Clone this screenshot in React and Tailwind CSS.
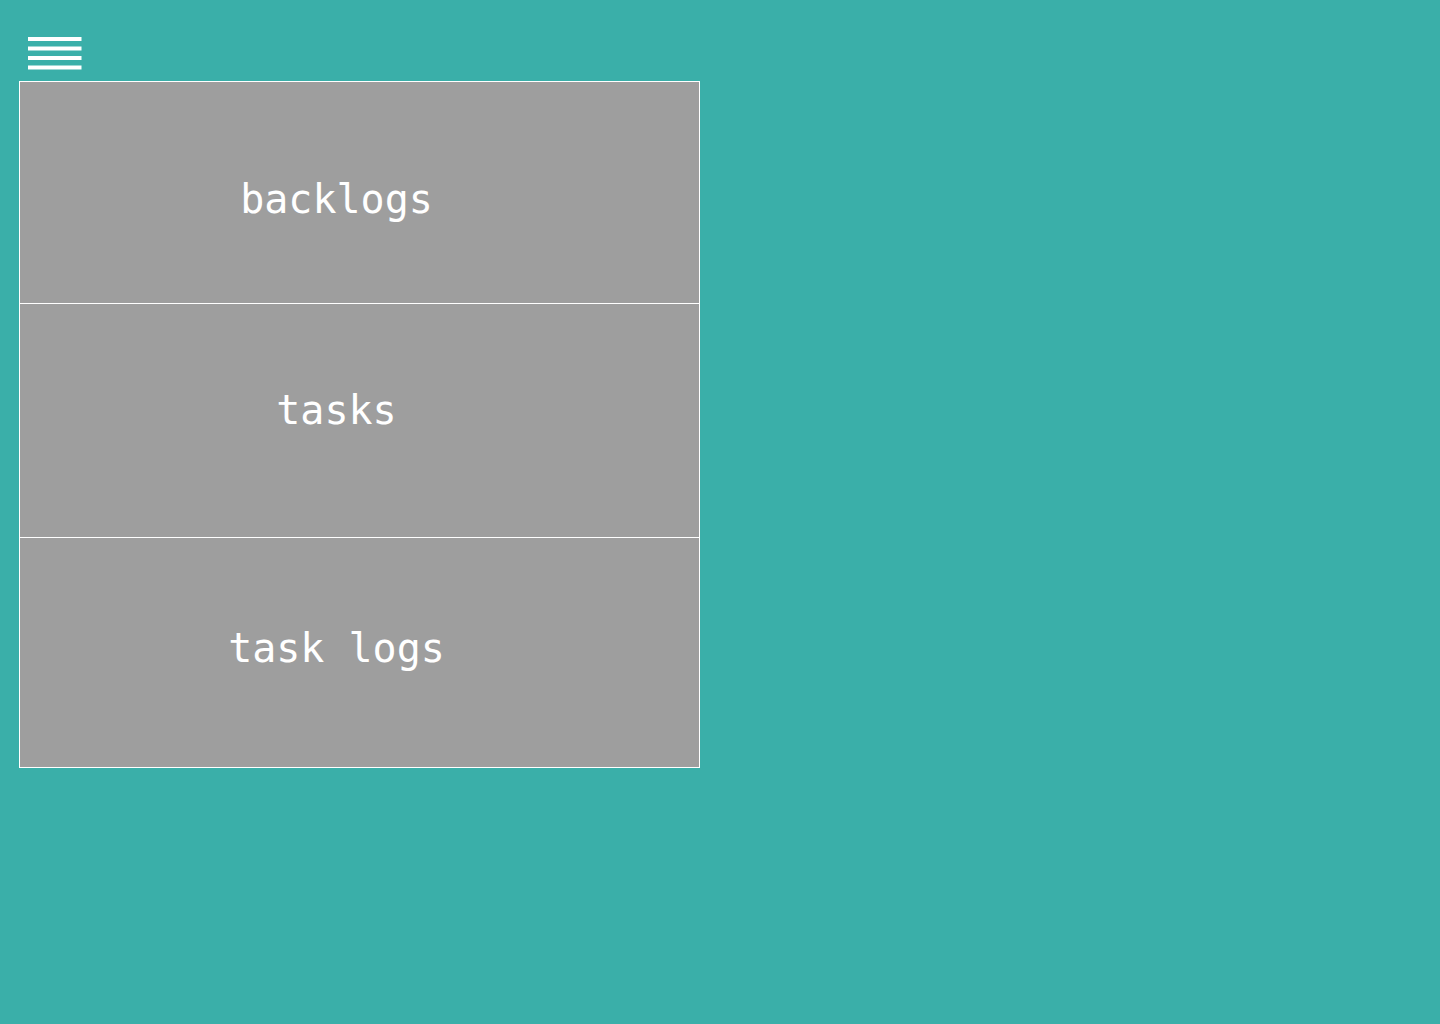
export default function App() {
  const mono = { fontFamily: '"DejaVu Sans Mono", monospace' };
  return (
    <div className="min-h-[1024px] w-full bg-[#3aafa9] px-[19px]" style={mono}>
      <div className="pt-[37px] pl-[9px]">
        <svg width="54" height="33" viewBox="0 0 54 33" className="block">
          <rect x="0" y="0" width="53.5" height="4" fill="#ffffff" />
          <rect x="0" y="9.5" width="53.5" height="4" fill="#ffffff" />
          <rect x="0" y="19" width="53.5" height="4" fill="#ffffff" />
          <rect x="0" y="28.5" width="53.5" height="4" fill="#ffffff" />
        </svg>
      </div>
      <ul className="mt-[11px] w-[681px] border border-white bg-[#9e9e9e] text-white font-light">
        <li className="h-[222px] border-b border-white pt-[97px] pr-[46px] text-center text-[40px] leading-[40px]">
          backlogs
        </li>
        <li className="h-[234px] border-b border-white pt-[86px] pr-[46px] text-center text-[40px] leading-[40px]">
          tasks
        </li>
        <li className="h-[229px] pt-[90px] pr-[46px] text-center text-[40px] leading-[40px] whitespace-pre">
          task logs
        </li>
      </ul>
    </div>
  );
}
